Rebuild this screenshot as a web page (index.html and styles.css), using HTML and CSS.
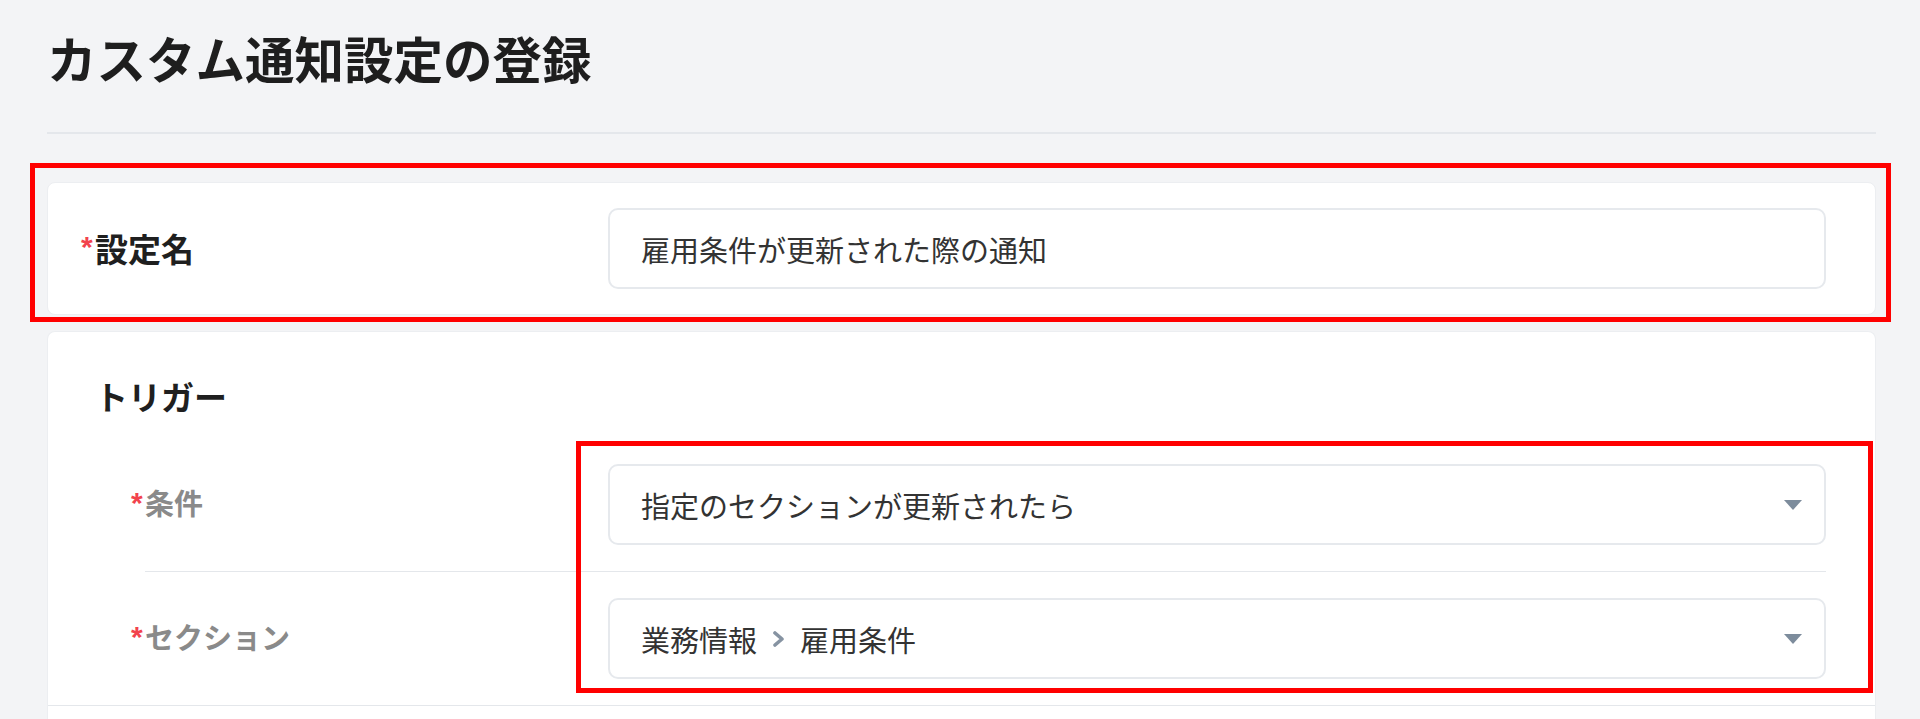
FILE: index.html
```html
<!DOCTYPE html>
<html lang="ja">
<head>
<meta charset="utf-8">
<title>カスタム通知設定の登録</title>
<link rel="stylesheet" href="styles.css">
</head>
<body>
<div class="page">
  <header class="page-header">
    <h1 class="page-title">カスタム通知設定の登録</h1>
  </header>

  <section class="card card-name">
    <div class="field-row">
      <label class="field-label field-label-strong"><span class="req">*</span>設定名</label>
      <div class="text-input">雇用条件が更新された際の通知</div>
    </div>
  </section>

  <section class="card card-trigger">
    <div class="trigger-section">
      <h2 class="section-title">トリガー</h2>
      <div class="trigger-rows">
        <div class="field-row sub-row">
          <label class="field-label field-label-muted"><span class="req">*</span>条件</label>
          <div class="select-input">
            <span class="select-value">指定のセクションが更新されたら</span>
            <span class="caret"></span>
          </div>
        </div>
        <div class="field-row sub-row">
          <label class="field-label field-label-muted"><span class="req">*</span>セクション</label>
          <div class="select-input">
            <span class="select-value crumbs">
              <span>業務情報</span>
              <svg class="chev" width="13" height="16" viewBox="0 0 13 16" aria-hidden="true"><polyline points="3,2 10,8 3,14" fill="none" stroke="#8693a2" stroke-width="3.6" stroke-linecap="round" stroke-linejoin="round"/></svg>
              <span>雇用条件</span>
            </span>
            <span class="caret"></span>
          </div>
        </div>
      </div>
    </div>
    <div class="next-section"></div>
  </section>

  <div class="highlight highlight-name"></div>
  <div class="highlight highlight-trigger"></div>
</div>
</body>
</html>
```

FILE: styles.css
```css
html, body {
  margin: 0;
  padding: 0;
}

body {
  background: #f3f4f6;
  font-family: "Noto Sans CJK JP", "Noto Sans", sans-serif;
  color: #222;
  overflow: hidden;
}

.page {
  position: relative;
  padding: 0 44px 0 47px;
}

.page-header {
  padding: 28px 0 44px;
  border-bottom: 2px solid #e4e7eb;
}

.page-title {
  margin: 0;
  font-size: 49.5px;
  line-height: 60px;
  font-weight: 700;
  color: #1e1e1e;
}

.card {
  background: #fff;
  border: 1px solid #eceef1;
  border-radius: 8px;
}

.card-name {
  margin-top: 48px;
  padding: 25px 49px 25px 47px;
}

.card-trigger {
  margin-top: 16px;
  border-bottom: none;
  border-radius: 8px 8px 0 0;
}

.field-row {
  display: flex;
  align-items: center;
}

.field-label {
  flex: 1;
  display: block;
  position: relative;
  line-height: 1.2;
}

.field-label-strong {
  font-size: 33px;
  font-weight: 700;
  color: #1f1f1f;
}

.field-label-muted {
  font-size: 29px;
  font-weight: 700;
  color: #8a8a8a;
}

.field-label-muted.field-label {
  top: -2px;
}

.req {
  display: inline-block;
  width: 14px;
  margin-left: -14px;
  padding-top: 3px;
  font-family: "Liberation Sans", sans-serif;
  font-size: 30px;
  line-height: 1;
  vertical-align: top;
  color: #f2434d;
  font-weight: 700;
}

.text-input,
.select-input {
  box-sizing: border-box;
  width: 1218px;
  height: 81px;
  border: 2px solid #e6e9ed;
  border-radius: 10px;
  padding: 0 22px 0 31px;
  display: flex;
  align-items: center;
  font-size: 29px;
  color: #333;
  background: #fff;
}

.select-input {
  justify-content: space-between;
}

.caret {
  width: 0;
  height: 0;
  border-left: 9px solid transparent;
  border-right: 9px solid transparent;
  border-top: 10px solid #7d8c9c;
}

.crumbs {
  display: flex;
  align-items: center;
  gap: 15px;
}

.chev {
  display: block;
}

.trigger-section {
  padding: 40px 49px 0 47px;
  border-bottom: 1px solid #e4e7eb;
}

.section-title {
  margin: 0 0 18px;
  font-size: 33px;
  line-height: 48px;
  font-weight: 700;
  color: #1f1f1f;
}

.trigger-rows {
  padding-left: 50px;
}

.sub-row {
  padding: 26px 0;
  border-bottom: 1px solid #e4e7eb;
}

.sub-row:last-child {
  border-bottom: none;
}

.next-section {
  height: 80px;
}

.highlight {
  position: absolute;
  box-sizing: border-box;
  border: 5px solid #ff0000;
  pointer-events: none;
}

.highlight-name {
  left: 30px;
  top: 163px;
  width: 1861px;
  height: 159px;
}

.highlight-trigger {
  left: 576px;
  top: 441px;
  width: 1297px;
  height: 252px;
}
```
